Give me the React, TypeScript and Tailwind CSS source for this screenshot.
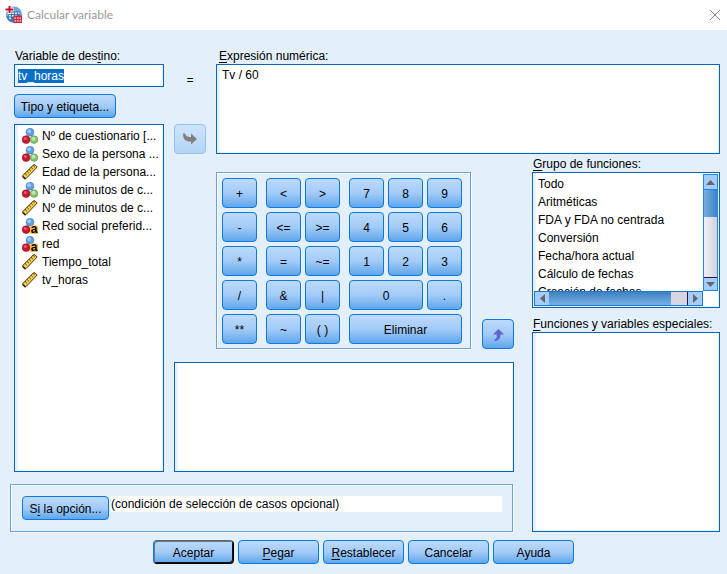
import { useEffect, useRef } from "react";
import type { ButtonHTMLAttributes } from "react";

const box =
  "border border-[#0a64b4] bg-white shadow-[inset_3px_0_0_#e8f2fc,inset_-1px_-1px_0_#e8f2fc]";

function Btn({ className = "", type = "button", ...rest }: ButtonHTMLAttributes<HTMLButtonElement>) {
  return (
    <button
      type={type}
      className={
        "flex items-center justify-center whitespace-nowrap rounded border bg-linear-to-b from-[#bddafc] via-[#a3cbf7] to-[#5ea6ec] pt-px " +
        className
      }
      {...rest}
    />
  );
}

function AppIcon() {
  return (
    <svg width="18" height="18" viewBox="0 0 18 18" aria-hidden="true">
      <circle cx="9" cy="8.500" r="8" fill="#6ea6d6" />
      <path d="M1.200 10a8 8 0 0 0 7.800 6.500V10z" fill="#3c7cba" />
      <path d="M3.500 5.500H15V13H3.500z" fill="#3a78b5" />
      <path
        d="M7 6.500h2v1.500H7zM10 6.500h2v1.500h-2zM13 6.500h1.500v1.500H13zM4 9h2v1.500H4zM7 9h2v1.500H7zM10 9h2v1h-2zM4 11.500h2V13H4z"
        fill="#e2f0fa"
      />
      <path d="M4.500 0v8M0 3.500h9" stroke="#fff" strokeWidth="3.500" />
      <path d="M4.500 0v7M0.500 3.500h8" stroke="#c8102e" strokeWidth="2" />
      <path d="M8.500 9.500H17V17H8.500z" fill="#c9283f" />
      <path
        d="M9.500 11.500h1.500v1.300H9.500zM12 11.500h1.500v1.300H12zM14.500 11.500H16v1.300h-1.500zM9.500 14.200h1.500v1.300H9.500zM12 14.200h1.500v1.300H12zM14.500 14.200H16v1.300h-1.500z"
        fill="#fbe4e8"
      />
    </svg>
  );
}

type Kind = "nominal" | "scale" | "text";

function VarIcon({ kind }: { kind: Kind }) {
  if (kind === "scale") {
    return (
      <svg width="16" height="16" viewBox="0 0 16 16" className="shrink-0" aria-hidden="true">
        <path d="M0.800 11.500 11.500 0.800h1.500L15.200 3 3.800 14.800H2.500L0.800 13z" fill="#f9cf45" stroke="#3a3320" strokeWidth="1" />
        <path
          d="M3.200 9.500l1.600 1.600M5.200 7.500l1.600 1.600M7.200 5.500l1.600 1.600M9.200 3.500l1.600 1.600M11.200 1.500l1.600 1.600"
          stroke="#2a2618"
          strokeWidth="0.900"
        />
        <path d="M1 12.500 3.500 15" stroke="#222" strokeWidth="1.400" />
      </svg>
    );
  }
  return (
    <svg width="16" height="16" viewBox="0 0 16 16" className="shrink-0" aria-hidden="true">
      <circle cx="8" cy="4.200" r="3.900" fill="#5b9fe6" stroke="#4479b5" strokeWidth="0.600" />
      <circle cx="7.200" cy="3.200" r="1.900" fill="#a0caf6" />
      <circle cx="4.100" cy="11.600" r="3.900" fill="#c91830" stroke="#8d1022" strokeWidth="0.600" />
      <circle cx="3.300" cy="10.600" r="1.500" fill="#e65a6c" />
      {kind === "nominal" ? (
        <>
          <circle cx="12" cy="11.600" r="3.800" fill="#85c56b" stroke="#4d9440" strokeWidth="0.600" />
          <circle cx="11.500" cy="10.800" r="2" fill="#c0e5af" />
        </>
      ) : (
        <>
          <rect x="8" y="7.500" width="8" height="8.500" rx="1.500" fill="#f9bf3c" />
          <text x="12" y="15" textAnchor="middle" fontSize="12" fontWeight="700" fontFamily="Liberation Sans, sans-serif">
            a
          </text>
        </>
      )}
    </svg>
  );
}

const variables: { kind: Kind; name: string }[] = [
  { kind: "nominal", name: "Nº de cuestionario [..." },
  { kind: "nominal", name: "Sexo de la persona ..." },
  { kind: "scale", name: "Edad de la persona..." },
  { kind: "nominal", name: "Nº de minutos de c..." },
  { kind: "scale", name: "Nº de minutos de c..." },
  { kind: "text", name: "Red social preferid..." },
  { kind: "text", name: "red" },
  { kind: "scale", name: "Tiempo_total" },
  { kind: "scale", name: "tv_horas" },
];

const functionGroups = [
  "Todo",
  "Aritméticas",
  "FDA y FDA no centrada",
  "Conversión",
  "Fecha/hora actual",
  "Cálculo de fechas",
  "Creación de fechas",
];

const keyGroups = [
  { cols: "grid-cols-[35px]", keys: ["+", "-", "*", "/", "**"] },
  { cols: "grid-cols-[35px_35px]", keys: ["<", ">", "<=", ">=", "=", "~=", "&", "|", "~", "( )"] },
  {
    cols: "grid-cols-[35px_35px_35px]",
    keys: ["7", "8", "9", "4", "5", "6", "1", "2", "3", "0", ".", "Eliminar"],
  },
];

function keySpan(key: string) {
  if (key === "0") return "col-span-2";
  if (key === "Eliminar") return "col-span-3";
  return "";
}

function ScrollArrow({ d, label, className }: { d: string; label: string; className: string }) {
  return (
    <button
      type="button"
      aria-label={label}
      className={"flex shrink-0 items-center justify-center bg-[#a5cdfb] " + className}
    >
      <svg width="9" height="9" viewBox="0 0 9 9" aria-hidden="true">
        <path d={d} fill="#66666c" />
      </svg>
    </button>
  );
}

export default function App() {
  const target = useRef<HTMLInputElement>(null);

  useEffect(() => {
    target.current?.focus();
    target.current?.select();
  }, []);

  return (
    <div className="flex min-h-screen flex-col bg-[#e3effb] font-['Liberation_Sans',Arial,sans-serif] text-xs leading-4 text-black">
      <header className="flex h-[30px] items-center bg-white pl-[5px] pr-1.5 font-[Lato,'Segoe_UI',sans-serif] text-[#999]">
        <AppIcon />
        <h1 className="ml-1 flex-1">Calcular variable</h1>
        <button type="button" aria-label="Cerrar">
          <svg width="12" height="12" viewBox="0 0 12 12" aria-hidden="true">
            <path d="M1 1l10 10M11 1 1 11" stroke="#888" strokeWidth="1" />
          </svg>
        </button>
      </header>

      <main className="grid grid-cols-[150px_32px_1fr_196px] gap-x-2.5 pl-3.5 pr-[7px] pt-[18px]">
        <div className="row-span-2 flex flex-col">
          <label htmlFor="target" className="pl-px">
            Variable de des<u className="underline-offset-2">t</u>ino:
          </label>
          <input
            ref={target}
            id="target"
            defaultValue="tv_horas"
            className={"h-[23px] px-[3px] outline-none selection:bg-[#0a6fc8] selection:text-white " + box}
          />
          <Btn className="mt-[7px] h-6 w-[102px] border-[#0a7ade]">Tipo y etiqueta...</Btn>
          <ul role="listbox" aria-label="Variables" className={"mt-1.5 flex-1 overflow-hidden pl-[7px] pt-0.5 " + box}>
            {variables.map((v, i) => (
              <li key={i} role="option" aria-selected={false} className="flex h-[18px] items-center gap-1 whitespace-nowrap">
                <VarIcon kind={v.kind} />
                {v.name}
              </li>
            ))}
          </ul>
        </div>

        <div className="flex flex-col items-center justify-between">
          <span className="pt-6">=</span>
          <button
            type="button"
            disabled
            aria-label="Mover variable"
            className="flex h-[30px] w-8 items-center justify-center rounded border border-[#8fc3f5] bg-linear-to-b from-[#cfe4fc] to-[#b3d4f7]"
          >
            <svg width="16" height="14" viewBox="0 0 16 14" aria-hidden="true">
              <path d="M1 1.500h2C4 4 5 5 9 5V1.500l6 5.500-6 5.500V9.500C4 9.500 1 8 1 1.500z" fill="#808080" />
            </svg>
          </button>
        </div>

        <div className="col-span-2 flex flex-col">
          <label htmlFor="expression" className="pl-[3px]">
            <u className="underline-offset-2">E</u>xpresión numérica:
          </label>
          <textarea
            id="expression"
            defaultValue="Tv / 60"
            className={"h-[90px] resize-none px-[5px] pt-0.5 outline-none " + box}
          />
        </div>

        <div className="col-span-2 pt-[18px]">
          <div className="flex items-end justify-between pl-[42px]">
            <div className="flex gap-[9px] border border-[#6ba3d8] pb-1 pl-[5px] pr-2 pt-[5px] shadow-[inset_1px_1px_0_#fff,1px_1px_0_#fff]">
              {keyGroups.map((group) => (
                <div key={group.cols} className={"grid auto-rows-[30px] gap-1 " + group.cols}>
                  {group.keys.map((k) => (
                    <Btn key={k} className={"border-[#0a7ade] " + keySpan(k)}>
                      {k}
                    </Btn>
                  ))}
                </div>
              ))}
            </div>
            <Btn aria-label="Insertar función" className="h-[30px] w-8 border-[#0a7ade]">
              <svg width="12" height="14" viewBox="0 0 12 14" aria-hidden="true">
                <path d="M6.500 1 12 6.500H8.500C8.500 10.500 6.500 13 2.500 13v-1.500C4.500 11 4.800 9.500 4.800 6.500H1z" fill="#6464cd" />
              </svg>
            </Btn>
          </div>
          <div className={"mt-[13px] h-[110px] " + box} />
        </div>

        <div className="row-span-2 flex flex-col pl-2 pt-0.5">
          <h2 id="groups" className="pl-px">
            <u className="underline-offset-2">G</u>rupo de funciones:
          </h2>
          <div className={"grid h-[136px] grid-cols-[1fr_15px] grid-rows-[1fr_15px] p-px " + box}>
            <ul role="listbox" aria-labelledby="groups" className="min-h-0 overflow-hidden pl-1 pt-px">
              {functionGroups.map((g) => (
                <li key={g} role="option" aria-selected={false} className="h-[18px] leading-[18px]">
                  {g}
                </li>
              ))}
            </ul>
            <div className="flex flex-col border border-[#1a86ea] bg-[#dddde6]">
              <ScrollArrow d="M0 7 4.500 2 9 7z" label="Subir" className="h-3.5" />
              <div className="h-7 border-t border-[#1a86ea] bg-linear-to-r from-[#78afe2] to-[#3c82c4]" />
              <div className="flex-1 border-b border-[#1c1c50] bg-linear-to-r from-[#f0f0f4] to-[#d4d0dc]" />
              <ScrollArrow d="M0 2h9L4.500 7z" label="Bajar" className="h-3" />
            </div>
            <div className="flex border border-[#1a78d0]">
              <ScrollArrow d="M7 0v9L2 4.500z" label="Izquierda" className="w-3.5" />
              <div className="flex-1 bg-linear-to-b from-[#3c82c4] to-[#78afe2]" />
              <div className="w-[17px] border-r border-[#1c1c50] bg-[#d8d5e0]" />
              <ScrollArrow d="M2 0v9l5-4.500z" label="Derecha" className="w-3.5" />
            </div>
          </div>
          <h2 id="functions" className="mt-2 whitespace-nowrap pl-px">
            <u className="underline-offset-2">F</u>unciones y variables especiales:
          </h2>
          <ul role="listbox" aria-labelledby="functions" className={"flex-1 " + box} />
        </div>

        <div className="col-span-3 -ml-1 mr-px mt-3 flex h-12 items-start gap-0.5 border border-[#6ba3d8] pl-[11px] pr-2.5 pt-[11px] shadow-[inset_1px_1px_0_#fff,1px_1px_0_#fff]">
          <Btn className="h-6 w-[87px] border-[#0a7ade]">
            S<u className="underline-offset-2">i</u>&nbsp;la opción...
          </Btn>
          <p className="flex-1 bg-white">(condición de selección de casos opcional)</p>
        </div>
      </main>

      <footer className="flex justify-center gap-1 pb-2.5 pt-2">
        <Btn
          type="submit"
          className="h-6 w-[81px] border-b-black border-l-[#0a7ade] border-r-black border-t-[#5c6670] shadow-[inset_-1px_-1px_0_#111,inset_1px_1px_0_#6f7780]"
        >
          Aceptar
        </Btn>
        <Btn className="h-6 w-[81px] border-[#0a7ade]">
          <u className="underline-offset-2">P</u>egar
        </Btn>
        <Btn className="h-6 w-[81px] border-[#0a7ade]">
          <u className="underline-offset-2">R</u>establecer
        </Btn>
        <Btn className="h-6 w-[81px] border-[#0a7ade]">Cancelar</Btn>
        <Btn className="h-6 w-[81px] border-[#0a7ade]">Ayuda</Btn>
      </footer>
    </div>
  );
}
